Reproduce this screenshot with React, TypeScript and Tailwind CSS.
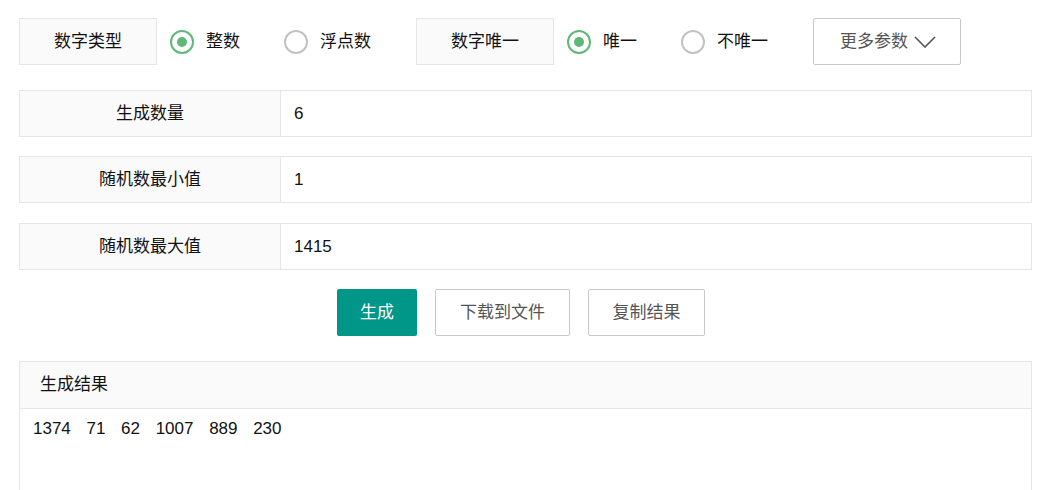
const font = { fontFamily: '"Liberation Sans", Arial, "Noto Sans CJK SC", sans-serif' };

function Radio({ label, checked, className }: { label: string; checked?: boolean; className?: string }) {
  return (
    <div className={`flex items-center ${className ?? ""}`}>
      <span
        className={`flex h-[24px] w-[24px] items-center justify-center rounded-full border-2 ${checked ? "border-[#5fb878]" : "border-[#c2c2c2]"}`}
      >
        {checked && <span className="h-[10px] w-[10px] rounded-full bg-[#5fb878]" />}
      </span>
      <span className="ml-[12px] text-[17px] text-[#111]">{label}</span>
    </div>
  );
}

function LabelBox({ text }: { text: string }) {
  return (
    <div className="flex h-[47px] w-[138px] items-center justify-center border border-[#e6e6e6] bg-[#fafafa] text-[17px] text-[#111]">
      {text}
    </div>
  );
}

function FieldRow({ label, value, className }: { label: string; value: string; className?: string }) {
  return (
    <div className={`flex h-[47px] border border-[#e6e6e6] ${className ?? ""}`}>
      <div className="flex w-[261px] items-center justify-center border-r border-[#e6e6e6] bg-[#fafafa] text-[17px] text-[#111]">
        {label}
      </div>
      <div className="flex flex-1 items-center pl-[13px] text-[17px] text-[#111]">{value}</div>
    </div>
  );
}

export default function App() {
  return (
    <div className="h-[490px] overflow-hidden bg-white pl-[19px] pr-[11px] pt-[18px]" style={font}>
      <div className="flex items-center">
        <LabelBox text="数字类型" />
        <Radio label="整数" checked className="ml-[13px]" />
        <Radio label="浮点数" className="ml-[44px]" />
        <div className="ml-[45px]">
          <LabelBox text="数字唯一" />
        </div>
        <Radio label="唯一" checked className="ml-[13px]" />
        <Radio label="不唯一" className="ml-[44px]" />
        <button className="ml-[45px] flex h-[47px] w-[148px] items-center justify-center rounded-[2px] border border-[#c9c9c9] bg-white pl-[2px] text-[17px] text-[#555]">
          更多参数
          <svg className="ml-[6px]" width="22" height="12" viewBox="0 0 22 12" fill="none">
            <polyline points="1,1 11,11 21,1" stroke="#555" strokeWidth="1.6" />
          </svg>
        </button>
      </div>

      <div className="mt-[25px] flex flex-col">
        <FieldRow label="生成数量" value="6" />
        <FieldRow label="随机数最小值" value="1" className="mt-[19px]" />
        <FieldRow label="随机数最大值" value="1415" className="mt-[20px]" />
      </div>

      <div className="mt-[19px] flex justify-center gap-[18px] pr-[9px]">
        <button className="h-[47px] w-[80px] rounded-[2px] bg-[#009688] text-[17px] text-white">生成</button>
        <button className="h-[47px] w-[135px] rounded-[2px] border border-[#c9c9c9] bg-white text-[17px] text-[#555]">
          下载到文件
        </button>
        <button className="h-[47px] w-[117px] rounded-[2px] border border-[#c9c9c9] bg-white text-[17px] text-[#555]">
          复制结果
        </button>
      </div>

      <div className="mt-[25px] border border-[#e6e6e6]">
        <div className="flex h-[47px] items-center border-b border-[#e6e6e6] bg-[#fafafa] pl-[20px] text-[17px] text-[#111]">
          生成结果
        </div>
        <div className="h-[150px] whitespace-pre px-[13px] pt-[7px] text-[17px] text-[#111] [word-spacing:0.5px]">
          {"1374   71   62   1007   889   230"}
        </div>
      </div>
    </div>
  );
}
